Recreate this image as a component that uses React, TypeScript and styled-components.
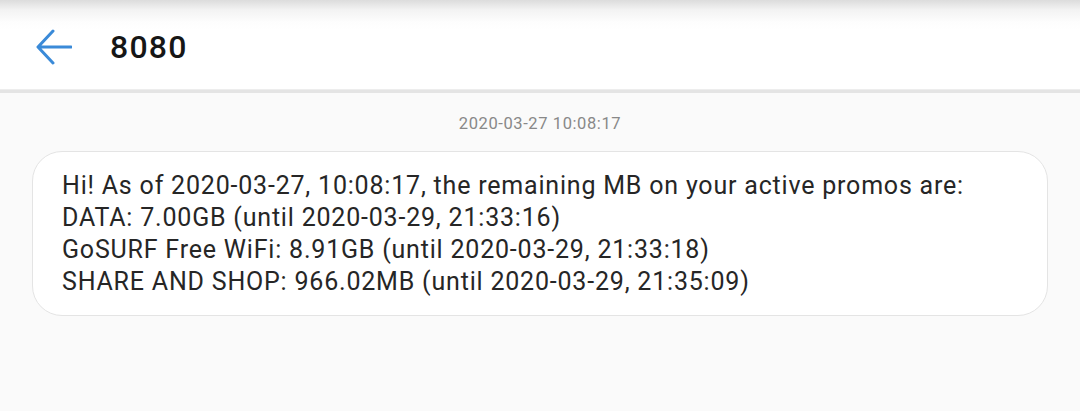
import React from "react";
import styled, { createGlobalStyle } from "styled-components";

const Global = createGlobalStyle`
  html, body { margin: 0; padding: 0; }
  body {
    background: #fafafa;
    font-family: Roboto, "Noto Sans", "Liberation Sans", sans-serif;
    width: 1080px;
    height: 411px;
    overflow: hidden;
  }
`;

const Page = styled.div`
  display: flex;
  flex-direction: column;
  width: 1080px;
  height: 411px;
  background: #fafafa;
`;

const Header = styled.header`
  display: flex;
  align-items: center;
  height: 89px;
  padding-left: 36px;
  gap: 38px;
  background: linear-gradient(to bottom, #dcdcdc 0px, #f3f3f3 10px, #fdfdfd 22px, #ffffff 30px);
  box-sizing: border-box;
  padding-top: 4px;
`;

const BackButton = styled.button`
  display: flex;
  align-items: center;
  justify-content: center;
  width: 36px;
  height: 36px;
  padding: 0;
  border: none;
  background: transparent;
`;

const Title = styled.h1`
  margin: 0;
  font-size: 32px;
  font-weight: 500;
  color: #161616;
  letter-spacing: 1.2px;
`;

const Divider = styled.div`
  height: 4px;
  background: #e4e4e4;
  border-top: 1px solid #ededed;
  box-sizing: border-box;
`;

const Thread = styled.main`
  display: flex;
  flex-direction: column;
  padding: 20px 32px 0 32px;
`;

const Stamp = styled.div`
  text-align: center;
  font-size: 16.5px;
  letter-spacing: 0.6px;
  color: #888;
  line-height: 22px;
  margin-bottom: 16px;
`;

const Bubble = styled.div`
  width: 1016px;
  box-sizing: border-box;
  background: #ffffff;
  border: 1px solid #e4e4e4;
  border-radius: 30px;
  padding: 18px 29px 17px 29px;
  font-size: 25px;
  letter-spacing: 0.8px;
  line-height: 32px;
  color: #262626;
`;

const Line = styled.div`
  white-space: nowrap;
`;

export default function App() {
  const lines = [
    "Hi! As of 2020-03-27, 10:08:17, the remaining MB on your active promos are:",
    "DATA: 7.00GB (until 2020-03-29, 21:33:16)",
    "GoSURF Free WiFi: 8.91GB (until 2020-03-29, 21:33:18)",
    "SHARE AND SHOP: 966.02MB (until 2020-03-29, 21:35:09)",
  ];
  return (
    <Page>
      <Global />
      <Header>
        <BackButton aria-label="Back">
          <svg width="36" height="36" viewBox="0 0 36 36" fill="none">
            <path
              d="M35 18 H3 M17 2 L2 18 L17 34"
              stroke="#3a8ad8"
              strokeWidth="3"
              strokeLinecap="round"
              strokeLinejoin="round"
            />
          </svg>
        </BackButton>
        <Title>8080</Title>
      </Header>
      <Divider />
      <Thread>
        <Stamp>2020-03-27 10:08:17</Stamp>
        <Bubble>
          {lines.map((l, i) => (
            <Line key={i}>{l}</Line>
          ))}
        </Bubble>
      </Thread>
    </Page>
  );
}
